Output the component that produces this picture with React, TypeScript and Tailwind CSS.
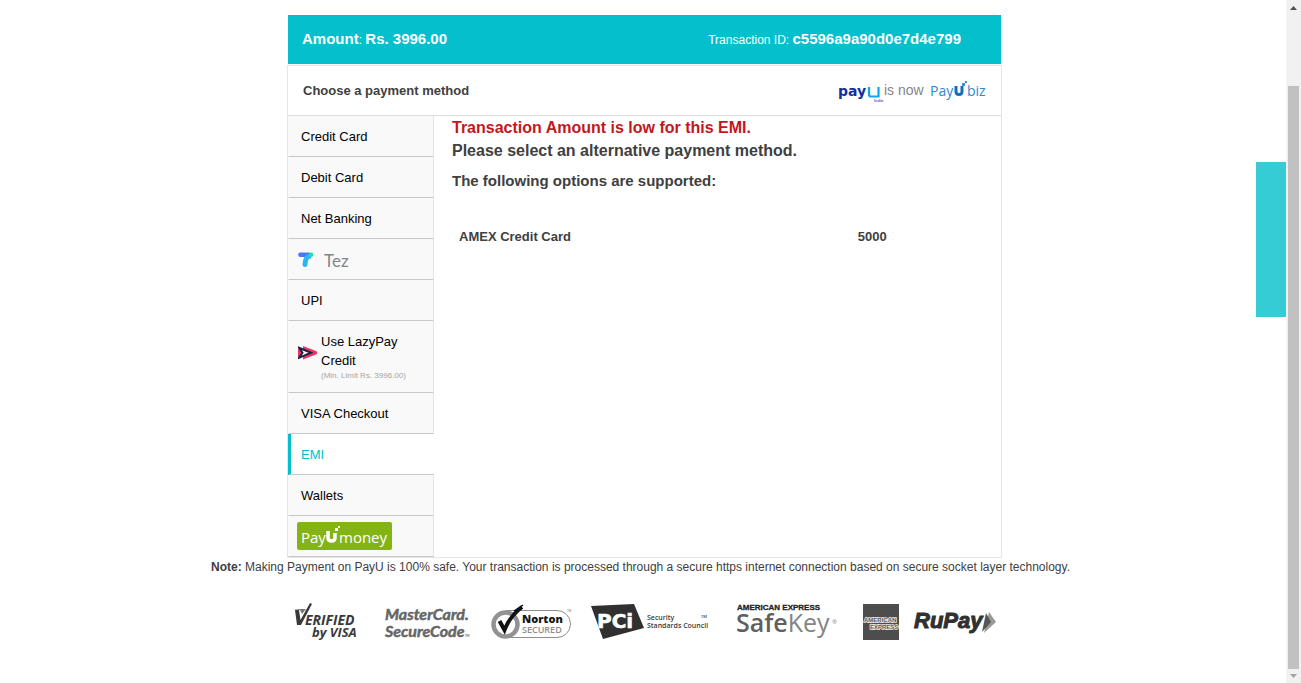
import type { ReactNode } from 'react';

const sans = 'font-["Liberation_Sans",Arial,sans-serif]';

function PayUBizLogo() {
  return (
    <svg width="150" height="24" viewBox="0 0 150 24" role="img" aria-label="PayU is now PayU biz">
      <text x="0" y="17" fontFamily="DejaVu Sans, sans-serif" fontWeight="700" fontSize="14" fill="#12309a">pay</text>
      <path d="M31 8v7.500q0 2 2 2H40.500V8" fill="none" stroke="#12a5ee" strokeWidth="2.200" />
      <text x="36" y="23" fontFamily="Liberation Sans, sans-serif" fontWeight="700" fontSize="4" fill="#5b6fb8">India</text>
      <text x="46" y="16" fontFamily="Liberation Sans, sans-serif" fontSize="14" fill="#858585">is now</text>
      <text x="92" y="17" fontFamily="Open Sans, sans-serif" fontSize="14" fill="#3089cc">Pay</text>
      <path d="M118 7v5.500q0 3 3 3t3-3V7" fill="none" stroke="#1670b8" strokeWidth="3" />
      <rect x="124" y="4" width="3" height="3" fill="#3a94d4" />
      <rect x="127" y="2" width="2" height="2" fill="#3a94d4" />
      <text x="129" y="17" fontFamily="Open Sans, sans-serif" fontSize="14" fill="#3089cc">biz</text>
    </svg>
  );
}

function TezLogo() {
  return (
    <svg width="58" height="24" viewBox="0 0 58 24" role="img" aria-label="Tez">
      <circle cx="9" cy="13" r="10" fill="#fcfcfc" stroke="#f3f3f3" strokeWidth="1" />
      <path d="M3.500 7.700H12" stroke="#4b74f8" strokeWidth="4.600" strokeLinecap="round" />
      <path d="M12 9.500Q8.500 10 8 17.500" fill="none" stroke="#27b9f2" strokeWidth="5" strokeLinecap="round" />
      <circle cx="14" cy="7.700" r="2.300" fill="#1fe0a2" />
      <text x="27" y="20" fontFamily="Lato, sans-serif" fontSize="17" fill="#858585">Tez</text>
    </svg>
  );
}

function LazyPayIcon() {
  return (
    <svg width="20" height="14" viewBox="0 0 20 14" className="mt-[14px] shrink-0" aria-hidden="true">
      <path d="M5 0L18 5Q20.500 6.700 18 8.500L5 13.500Z" fill="#f0355f" />
      <path d="M0 2V11.500L5 7Z" fill="#f0355f" />
      <path d="M1 1.800L13 6.700L1 11.800L4.500 6.700Z" fill="#fdfdfd" stroke="#1b2145" strokeWidth="2" />
    </svg>
  );
}

function PayUMoneyLogo() {
  return (
    <svg width="95" height="28" viewBox="0 0 95 28" role="img" aria-label="PayU money">
      <rect width="95" height="28" rx="2" fill="#84b414" />
      <text x="4" y="21" fontFamily="Open Sans, sans-serif" fontSize="15" fill="#fff">Pay</text>
      <path d="M31 9v6.500q0 3.500 3.500 3.500t3.500-3.500V11" fill="none" stroke="#fff" strokeWidth="3.500" />
      <rect x="38" y="6" width="3" height="3" fill="#fff" />
      <rect x="41" y="4" width="2" height="2" fill="#fff" />
      <text x="42" y="21" fontFamily="Open Sans, sans-serif" fontSize="15" fill="#fff">money</text>
    </svg>
  );
}

function VerifiedByVisa() {
  return (
    <svg width="90" height="44" viewBox="0 0 90 44" role="img" aria-label="Verified by Visa">
      <path d="M7 10H11L12.500 20L22 3L24 4L13 25H9Z" fill="#3a3a3a" />
      <path d="M5 9L18 9L14 14L12 10Z" fill="#777" />
      <g fontFamily="Open Sans, sans-serif" fontWeight="700" fontStyle="italic" fill="#3a3a3a">
        <text x="17" y="25" fontSize="14">ERIFIED</text>
        <text x="24" y="37" fontSize="13">by VISA</text>
      </g>
    </svg>
  );
}

function MasterCardSecureCode() {
  return (
    <svg width="104" height="44" viewBox="0 0 104 44" role="img" aria-label="MasterCard SecureCode">
      <g fontFamily="Lato, sans-serif" fontWeight="700" fontStyle="italic" fill="#666">
        <g fontSize="16" stroke="#666" strokeWidth="0.500">
          <text x="7" y="20">MasterCard.</text>
          <text x="7" y="37">SecureCode</text>
        </g>
        <text x="87" y="37" fontSize="3">TM</text>
      </g>
    </svg>
  );
}

function NortonSecured() {
  return (
    <svg width="100" height="44" viewBox="0 0 100 44" role="img" aria-label="Norton Secured">
      <path d="M24 10.500H75a13.500 13.500 0 0 1 0 27H24" fill="#fff" stroke="#8e8e8e" strokeWidth="1" />
      <circle cx="23.500" cy="24.500" r="12" fill="#fff" stroke="#929292" strokeWidth="4.500" />
      <path d="M17.500 21L22.500 30Q28 16 40 7" fill="none" stroke="#111" strokeWidth="4" />
      <path d="M32 11L41 5" stroke="#111" strokeWidth="1.500" />
      <text x="40" y="23" fontFamily="Open Sans, sans-serif" fontWeight="800" fontSize="11" fill="#161616">Norton</text>
      <text x="40" y="33" fontFamily="Open Sans, sans-serif" fontSize="9" fontWeight="600" fill="#8d8d8d">SECURED</text>
      <text x="85" y="12" fontFamily="Liberation Sans, sans-serif" fontSize="3" fill="#777">TM</text>
    </svg>
  );
}

function PciCouncil() {
  return (
    <svg width="140" height="44" viewBox="0 0 140 44" role="img" aria-label="PCI Security Standards Council">
      <path d="M9 6L52 4L62 28L21 39Z" fill="#303030" />
      <text x="15" y="28" fontFamily="DejaVu Sans, sans-serif" fontWeight="700" fontSize="20" fill="#fff" stroke="#fff" strokeWidth="0.600">PCi</text>
      <g fontFamily="Open Sans, sans-serif" fontWeight="600" fontSize="7" fill="#3a3a3a">
        <text x="65" y="20">Security</text>
        <text x="65" y="28">Standards Council</text>
        <text x="119" y="18" fontSize="4">TM</text>
      </g>
    </svg>
  );
}

function SafeKey() {
  return (
    <svg width="132" height="44" viewBox="0 0 132 44" role="img" aria-label="American Express SafeKey">
      <text x="15" y="10" fontFamily="Liberation Sans, sans-serif" fontWeight="700" fontSize="8" fill="#222" stroke="#222" strokeWidth="0.300">AMERICAN EXPRESS</text>
      <text x="14" y="32" fontFamily="Open Sans, sans-serif" fontSize="25" fill="#848484">
        <tspan fontWeight="600" fill="#5f5f5f">Safe</tspan>Key
      </text>
      <text x="110" y="24" fontFamily="Open Sans, sans-serif" fontSize="6" fill="#888">®</text>
    </svg>
  );
}

function Amex() {
  return (
    <svg width="54" height="44" viewBox="0 0 54 44" role="img" aria-label="American Express">
      <rect x="9" y="4" width="36" height="36" fill="#4d4d4d" />
      <g fontFamily="Liberation Sans, sans-serif" fontWeight="700" fontSize="6" fill="#555" stroke="#eee" strokeWidth="1.500" paintOrder="stroke">
        <text x="10" y="22">AMERICAN</text>
        <text x="16" y="29">EXPRESS</text>
      </g>
    </svg>
  );
}

function RuPay() {
  return (
    <svg width="94" height="44" viewBox="0 0 94 44" role="img" aria-label="RuPay">
      <path d="M81 12L88 22L76 33Z" fill="#999" />
      <path d="M78 13L83 22L74 32Z" fill="#555" />
      <text x="6" y="28" fontFamily="Liberation Sans, sans-serif" fontWeight="700" fontStyle="italic" fontSize="22" fill="#303030" stroke="#303030" strokeWidth="1">RuPay</text>
    </svg>
  );
}

function MethodButton({ active, logo, children }: { active?: boolean; logo?: boolean; children: ReactNode }) {
  const tone = active
    ? 'border-l-[3px] border-l-[#04bfcc] bg-white pl-[10px] text-[#04bfcc]'
    : 'border-x border-r-[#e5e5e5] border-l-[#f9f9f9] bg-[#f9f9f9] text-black ' + (logo ? 'pl-2' : 'pl-3');
  return (
    <button
      type="button"
      aria-current={active ? 'true' : undefined}
      className={`flex min-h-[41px] w-full items-center border-b border-b-[#c8c8c8] text-left text-[13px] leading-[19px] ${tone}`}
    >
      {children}
    </button>
  );
}

const options = [{ name: 'AMEX Credit Card', minimum: '5000' }];

export default function App() {
  return (
    <div className={`flex h-screen bg-white text-[#404040] ${sans}`}>
      <main className="relative min-w-0 flex-1 pt-[15px]">
        <div className="mx-auto w-full max-w-[718px] pl-[3px]">
          <header className="mx-px flex h-[49px] items-center justify-between bg-[#04bfcc] pr-10 pl-[14px] text-[12px] text-white">
            <p>
              <b className="text-[15px]">Amount</b>: <b className="text-[15px]">Rs. 3996.00</b>
            </p>
            <p>
              Transaction ID: <b className="text-[15px]">c5596a9a90d0e7d4e799</b>
            </p>
          </header>

          <section className="mt-px border border-[#e5e5e5]">
            <div className="flex h-[50px] items-center justify-between border-b border-[#dcdcdc] pr-[13px] pl-[15px]">
              <h1 className="text-[13px] font-bold">Choose a payment method</h1>
              <PayUBizLogo />
            </div>

            <div className="flex">
              <nav aria-label="Payment methods" className="w-[146px] shrink-0">
                <MethodButton>Credit Card</MethodButton>
                <MethodButton>Debit Card</MethodButton>
                <MethodButton>Net Banking</MethodButton>
                <MethodButton logo><TezLogo /></MethodButton>
                <MethodButton>UPI</MethodButton>
                <MethodButton logo>
                  <span className="flex items-start gap-[3px] py-[11px] pl-px">
                    <LazyPayIcon />
                    <span>
                      Use LazyPay
                      <br />
                      Credit
                      <small className="block text-[8px] leading-[11px] text-[#a5a5a5]">(Min. Limit Rs. 3996.00)</small>
                    </span>
                  </span>
                </MethodButton>
                <MethodButton>VISA Checkout</MethodButton>
                <MethodButton active>EMI</MethodButton>
                <MethodButton>Wallets</MethodButton>
                <MethodButton logo><PayUMoneyLogo /></MethodButton>
              </nav>

              <div className="min-w-0 flex-1 pr-2 pl-[18px] font-bold">
                <p className="text-[16px] leading-[23px] text-[#c4161c]">Transaction Amount is low for this EMI.</p>
                <p className="text-[16px] leading-[23px]">Please select an alternative payment method.</p>
                <p className="mt-2 text-[15px] leading-[22px]">The following options are supported:</p>
                <table className="mt-[31px] w-full table-fixed text-left text-[13px]">
                  <tbody>
                    {options.map((o) => (
                      <tr key={o.name}>
                        <th scope="row" className="w-3/4 py-1 pl-[7px] leading-[20px]">{o.name}</th>
                        <td className="py-1 leading-[20px]">{o.minimum}</td>
                      </tr>
                    ))}
                  </tbody>
                </table>
              </div>
            </div>
          </section>
        </div>

        <p className="pr-[5px] text-center text-[12px] leading-[18px]">
          <b>Note:</b> Making Payment on PayU is 100% safe. Your transaction is processed through a secure https
          internet connection based on secure socket layer technology.
        </p>

        <footer className="mx-auto mt-6 flex w-full max-w-[718px] items-center justify-center pl-[3px]">
          <VerifiedByVisa />
          <MasterCardSecureCode />
          <NortonSecured />
          <PciCouncil />
          <SafeKey />
          <Amex />
          <RuPay />
        </footer>

        <button
          type="button"
          aria-label="Feedback"
          className="absolute top-[162px] right-0 h-[155px] w-[30px] bg-[#36ccd6]"
        />
      </main>

      <div aria-hidden="true" className="flex w-[15px] shrink-0 flex-col items-center bg-[#f1f1f1]">
        <svg width="15" height="15" viewBox="0 0 15 15">
          <path d="M4 10L7.500 6L11 10Z" fill="#505050" />
        </svg>
        <div className="mt-[71px] w-[11px] flex-1 bg-[#c1c1c1]" />
        <svg width="15" height="14" viewBox="0 0 15 14">
          <path d="M4 5L7.500 9L11 5Z" fill="#a3a3a3" />
        </svg>
      </div>
    </div>
  );
}
